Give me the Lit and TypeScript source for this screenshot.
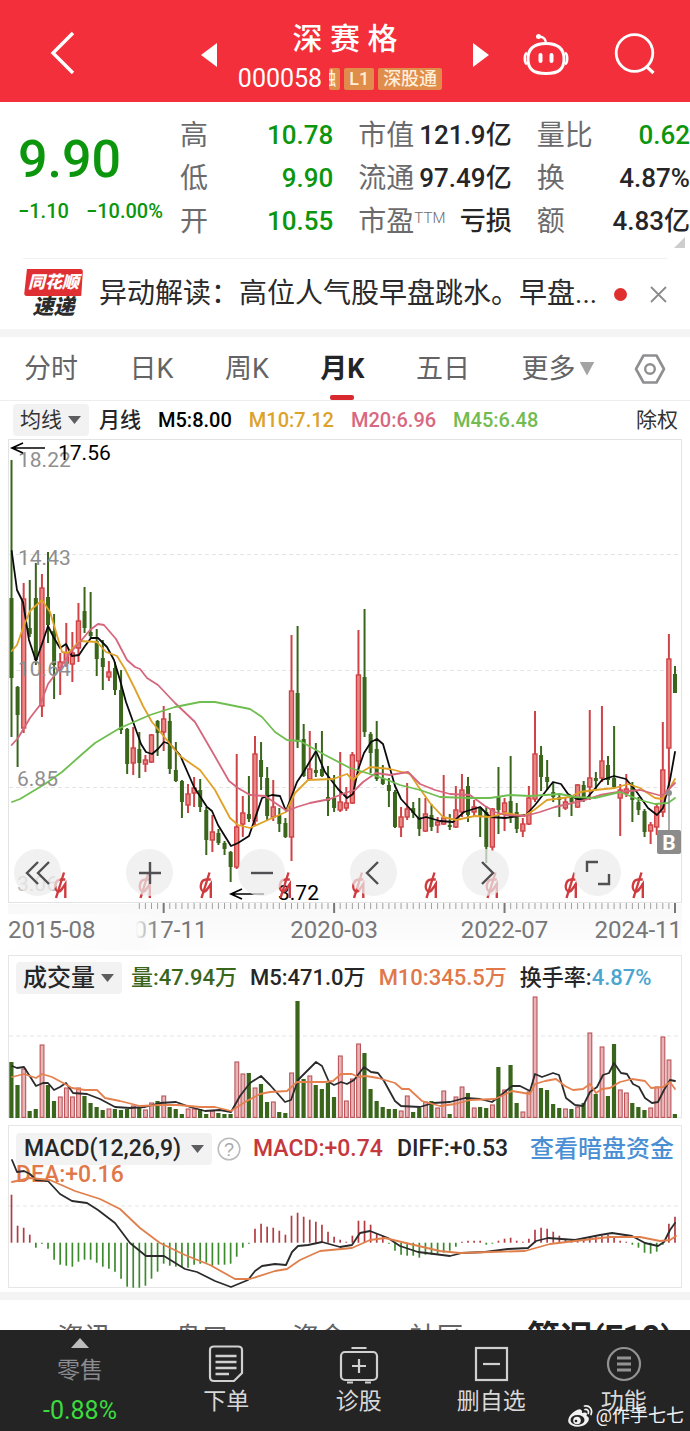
import { LitElement, html, svg, css } from "lit";
import { customElement } from "lit/decorators.js";

type Candle = [up: 0 | 1, high: number, top: number, bottom: number, low: number];

const FIRST_X = 11.5;
const STEP = 6.087;
const xAt = (i: number) => FIRST_X + i * STEP;

/* One entry per month: direction, high, body top, body bottom, low (chart units). */
const CANDLES: Candle[] = [
  [0,460,598,678,737],[0,686,687,715,767],[1,583,599,728,733],[0,580,628,634,637],[0,563,598,660,665],
  [1,574,588,706,717],[0,552,597,625,643],[0,614,631,665,699],[1,653,662,668,695],[1,623,653,663,667],
  [1,632,653,664,682],[1,603,621,648,662],[0,587,611,628,633],[0,592,632,636,638],[0,629,641,659,676],
  [0,640,658,667,690],[1,661,672,677,681],[0,662,668,690,695],[0,670,690,730,734],[0,728,729,764,774],
  [1,727,748,763,775],[0,732,749,763,778],[1,755,760,764,772],[1,734,735,762,763],[0,720,721,733,756],
  [1,706,719,732,751],[0,713,721,769,774],[0,742,770,781,782],[0,780,781,802,818],[1,784,794,805,813],
  [1,777,788,793,807],[0,779,790,807,812],[0,807,810,840,855],[1,815,832,840,852],[0,829,833,843,845],
  [0,841,843,849,855],[0,851,852,867,882],[1,754,827,867,869],[1,796,813,824,837],[0,776,814,819,822],
  [1,736,754,821,825],[0,742,760,777,790],[0,767,778,816,820],[1,780,807,817,821],[0,808,815,824,832],
  [0,818,823,837,838],[1,635,691,837,861],[0,626,693,742,748],[0,724,739,776,777],[1,731,769,779,780],
  [0,743,770,773,777],[0,731,769,776,777],[0,766,797,801,816],[0,775,798,808,812],[1,752,802,810,812],
  [1,787,803,808,811],[1,752,755,803,804],[1,630,675,761,773],[0,609,677,732,737],[0,732,734,753,773],
  [0,721,749,779,781],[0,765,778,784,785],[0,778,785,791,807],[0,790,792,827,828],[1,807,817,827,837],
  [1,783,809,817,820],[0,802,808,813,818],[0,798,817,829,836],[1,798,814,831,832],[0,804,815,827,831],
  [1,817,822,825,833],[1,775,818,824,825],[0,814,825,827,830],[1,786,810,827,828],[1,774,790,812,817],
  [0,777,786,815,822],[1,800,807,812,816],[0,807,808,817,837],[0,806,812,847,863],[1,808,809,847,851],
  [0,767,796,810,834],[1,798,803,812,831],[0,756,801,817,823],[0,803,812,829,833],[1,818,824,831,837],
  [1,786,798,824,825],[1,711,754,799,802],[0,746,755,777,791],[0,760,777,782,790],[0,782,792,797,802],
  [0,793,797,800,817],[1,798,802,808,810],[0,795,798,802,816],[1,784,785,807,808],[0,781,785,800,802],
  [1,710,778,787,800],[0,772,778,781,789],[1,706,761,778,782],[0,756,765,780,785],[0,726,778,787,788],
  [1,784,790,798,836],[1,774,789,793,797],[0,782,785,800,822],[0,797,802,810,815],[0,809,811,832,837],
  [1,822,825,831,844],[1,804,807,827,835],[1,722,770,812,817],[1,634,659,748,793],[0,666,674,693,693],
];

const VOLUMES = [
  56,33,49,7,9,73,33,17,21,30,21,30,22,15,11,8,9,9,8,9,12,10,8,15,17,22,11,9,4,9,9,9,4,7,5,4,4,56,44,45,
  30,34,16,16,6,5,45,117,39,42,33,29,35,21,62,17,39,74,65,29,17,11,9,9,7,22,6,10,16,17,10,27,4,21,31,25,10,
  11,10,13,51,28,53,15,6,26,121,30,28,14,10,9,9,11,15,85,24,71,22,74,28,25,15,11,8,10,31,81,58,4,
];

const MACD_BARS = [
  48,17,15,8,-5,-1,-6,-17,-22,-23,-24,-19,-17,-17,-20,-24,-26,-29,-36,-44,-45,-45,-43,-36,-29,-21,-23,-24,
  -25,-25,-22,-21,-20,-23,-22,-22,-21,-14,-5,-1,14,19,16,15,12,8,27,30,26,23,21,18,11,6,3,1,7,22,22,18,9,7,
  -1,-8,-12,-13,-13,-15,-12,-12,-11,-10,-8,-4,1,2,2,2,-2,-1,2,4,5,2,1,4,13,15,14,11,7,4,3,3,4,6,6,7,8,6,2,1,
  -2,-5,-10,-11,-9,-2,19,26,
];

const LINES = {
  m5: "11.7,551 17,590 23,602 29,640 36,661 43,641 48,626 54,638 60,648 66,644 72,656 79,655 85,646 91,638 98,638 107,647 114,660 120,680 126,702 136,730 141,744 146,752 152,754 158,749 164,742 170,744 180,755 194,787 207,807 212,811 218,825 231,846 238,843 249,836 262,798 272,795 280,796 286,811 297,782 303,773 316,751 325,772 338,789 347,798 353,794 358,770 364,753 371,742 377,739 383,744 389,765 395,786 401,799 413,812 419,819 426,817 440,821 453,822 464,812 480,807 490,817 505,818 526,815 535,805 553,782 561,784 568,794 577,799 586,799 593,791 602,780 614,776 626,779 636,791 648,808 657,815 663,808 670,780 675,752",
  m10: "11.7,651 17,645 23,628 30,611 42,600 50,612 56,632 62,652 68,653 80,641 97,642 106,652 117,656 125,669 135,689 143,706 152,722 166,739 180,756 200,770 215,790 230,818 238,825 250,828 270,819 286,812 295,793 308,780 333,779 347,774 353,780 360,773 370,767 390,769 410,774 418,786 430,803 443,817 456,820 475,816 490,817 505,813 524,816 534,810 547,800 570,797 580,792 595,790 615,788 628,784 640,788 655,798 662,799 668,791 675,779",
  m20: "11.7,745 18,738 30,718 40,705 48,684 60,668 70,653 80,642 90,630 98,624 104,625 116,639 127,660 135,667 140,669 147,678 158,685 175,703 195,722 213,753 229,781 238,788 250,795 265,796 287,811 297,807 310,803 330,799 345,793 355,790 363,782 376,773 390,775 408,772 420,784 435,790 450,794 470,795 485,806 495,812 505,815 525,816 540,812 555,807 585,800 600,795 618,792 640,790 662,796 675,783",
  m45: "12,802 20,799 30,793 45,784 62,772 80,756 95,743 120,728 150,715 175,707 200,702 215,702 240,707 250,709 262,717 275,732 287,740 300,741 325,755 350,768 370,774 385,779 400,785 420,790 440,797 470,798 490,798 510,795 530,796 560,794 575,797 595,798 620,792 640,800 655,804 668,803 675,798",
  v5: "12,1066 17,1068 24,1067 36,1086 43,1083 48,1083 54,1090 60,1087 66,1083 73,1093 87,1094 100,1099 115,1107 130,1108 145,1107 160,1103 176,1102 190,1107 205,1111 220,1110 231,1112 240,1096 250,1083 261,1076 270,1085 278,1094 285,1102 291,1100 298,1080 305,1073 316,1062 322,1066 329,1082 334,1085 341,1082 347,1084 354,1080 364,1067 371,1072 378,1073 384,1081 395,1101 401,1106 420,1107 433,1103 450,1102 465,1098 480,1099 492,1102 500,1096 512,1086 520,1086 530,1091 535,1074 542,1077 553,1073 559,1075 566,1098 575,1105 583,1106 590,1092 597,1087 603,1075 609,1073 614,1063 621,1073 627,1074 633,1084 639,1087 645,1098 652,1103 658,1102 664,1090 670,1080 675,1081",
  v10: "12,1077 24,1074 36,1078 42,1074 52,1077 65,1084 72,1088 85,1090 97,1090 105,1098 120,1101 140,1106 160,1105 178,1105 200,1107 215,1107 231,1111 245,1102 260,1094 270,1092 287,1091 297,1082 325,1082 333,1081 341,1074 352,1074 358,1077 366,1076 378,1078 395,1083 402,1089 409,1089 422,1101 440,1106 455,1104 470,1100 495,1099 512,1091 530,1094 535,1084 545,1081 556,1079 565,1086 573,1090 583,1089 590,1084 596,1093 602,1089 610,1088 620,1082 632,1079 645,1081 651,1088 663,1087 670,1082 675,1089",
  diff: "12,1160 17,1172 24,1171 30,1174 36,1180 48,1181 60,1194 72,1201 87,1203 98,1210 115,1223 130,1243 146,1256 164,1256 185,1269 197,1272 215,1281 231,1287 248,1280 255,1271 262,1266 275,1264 286,1265 292,1252 298,1246 308,1245 322,1242 340,1247 352,1245 360,1233 370,1231 388,1238 400,1246 418,1252 450,1256 462,1253 485,1252 508,1249 528,1248 536,1241 548,1238 575,1240 600,1235 612,1233 632,1236 645,1243 658,1246 664,1242 670,1230 675,1223",
  dea: "12,1182 30,1178 50,1180 75,1191 100,1199 120,1209 140,1228 160,1243 185,1255 210,1265 235,1279 250,1279 275,1271 287,1269 300,1260 320,1251 352,1248 370,1240 385,1238 410,1244 440,1251 460,1253 490,1252 525,1251 550,1244 575,1241 610,1237 640,1237 660,1241 670,1240 676,1236",
};

const GREEN = "#3a661c";
const RED = "#cf4246";

const line = (points: string, color: string) =>
  svg`<polyline points=${points} fill="none" stroke=${color} stroke-width="1.8" stroke-linejoin="round" stroke-linecap="round"/>`;

const grid = (y: number) =>
  svg`<line x1="9" x2="682" y1=${y} y2=${y} stroke="#e4e4e4" stroke-dasharray="4 3"/>`;

const candle = ([up, high, top, bottom, low]: Candle, i: number) => {
  const x = xAt(i);
  return up
    ? svg`<line x1=${x} x2=${x} y1=${high} y2=${low} stroke=${RED} stroke-width="2"/>
          <rect x=${x - 2} y=${top} width="4" height=${bottom - top} fill="#e88784" stroke=${RED} stroke-width="1.4"/>`
    : svg`<line x1=${x} x2=${x} y1=${high} y2=${low} stroke=${GREEN} stroke-width="2"/>
          <rect x=${x - 2} y=${top} width="4" height=${bottom - top} fill=${GREEN}/>`;
};

const volume = (h: number, i: number) =>
  CANDLES[i][0]
    ? svg`<rect x=${xAt(i) - 1.8} y=${1117.4 - h + 0.6} width="3.8" height=${h - 0.6} fill="#e8b4b6" stroke="#b9555a" stroke-width="1.1"/>`
    : svg`<rect x=${xAt(i) - 2.2} y=${1118 - h} width="4.2" height=${h} fill=${GREEN}/>`;

const macdBar = (h: number, i: number) =>
  svg`<line x1=${xAt(i)} x2=${xAt(i)} y1="1242.7" y2=${1242.7 - h} stroke=${h > 0 ? "#b23c42" : "#3b8b2c"} stroke-width="1.7"/>`;

/* Dividend event glyph: a bowl, a stem and a slash. */
const eventMark = (x: number) => svg`
  <g transform="translate(${x} 886)" fill="none" stroke="#cf3b3e" stroke-width="2.4">
    <path d="M4.8 -6.5H1C-6 -7 -7 4 -2.500 5.500C0 6 1.500 3 4.800 -2V12"/>
    <path d="M-4.500 12L3.500 -13.500"/>
  </g>`;

const arrow = (x: number, y: number) =>
  svg`<path d="M${x + 33} ${y}H${x}M${x + 11} ${y - 5}L${x} ${y}L${x + 11} ${y + 5}" fill="none" stroke="#000" stroke-width="1.7"/>`;

@customElement("stock-header")
class StockHeader extends LitElement {
  static styles = css`
    :host { display: block; background: #f22f3a; color: #fff; }
    .bar { display: grid; grid-template-columns: 1fr 290px 1fr; align-items: center; height: 102px; }
    button { border: 0; padding: 0; background: none; color: inherit; display: grid; place-items: center; }
    .back { justify-self: start; margin: 4px 0 0 48px; }
    .mid { display: flex; align-items: center; justify-content: space-between; }
    .mid button { margin-top: 8px; }
    .title { display: flex; flex-direction: column; align-items: center; padding-top: 16px; }
    h1 { margin: 0; font-size: 30px; font-weight: 500; line-height: 40px; white-space: pre; }
    .sub { display: flex; align-items: center; gap: 4px; line-height: 40px; padding-right: 10px; }
    .code { font-size: 25px; padding-right: 3px; }
    .tag { background: #e08c4b; color: #ffeed8; border-radius: 2px; font-size: 18px; font-weight: 500; line-height: 22px; height: 22px; padding: 0 5px; }
    .cut { width: 11px; padding: 0; overflow: hidden; display: flex; justify-content: flex-end; box-sizing: border-box; padding-right: 4px; }
    .right { display: flex; justify-content: flex-end; align-items: center; gap: 44px; padding: 6px 33px 0 0; }
  `;
  render() {
    return html`<header class="bar">
      <button class="back" aria-label="返回"><svg width="28" height="46" viewBox="0 0 28 46"><path d="M25 3L5 23L25 43" fill="none" stroke="#fff" stroke-width="3.4"/></svg></button>
      <div class="mid">
        <button aria-label="上一只"><svg width="17" height="26" viewBox="0 0 17 26"><path d="M17 1V25L1 13Z" fill="#fff"/></svg></button>
        <div class="title">
          <h1>深 赛 格</h1>
          <div class="sub"><span class="code">000058</span><span class="tag cut">融</span><span class="tag">L1</span><span class="tag">深股通</span></div>
        </div>
        <button aria-label="下一只"><svg width="17" height="26" viewBox="0 0 17 26"><path d="M0 1V25L16 13Z" fill="#fff"/></svg></button>
      </div>
      <div class="right">
        <button aria-label="助手"><svg width="48" height="44" viewBox="0 0 48 44" fill="none" stroke="#fff" stroke-width="3">
          <path d="M24 11.500C38 11.500 42 19 42 27C42 37 37 41.500 24 41.500C11 41.500 6 37 6 27C6 19 10 11.500 24 11.500Z"/>
          <path d="M5 21C2 22 2 31 5 32M43 21C46 22 46 31 43 32" stroke-width="2.500"/>
          <path d="M24 12C24 7 22 5 17 4.500" stroke-width="2.500"/><circle cx="16.500" cy="4.500" r="2.500" fill="#fff" stroke="none"/>
          <path d="M18.500 23V29M29.500 23V29" stroke-width="4" stroke-linecap="round"/></svg></button>
        <button aria-label="搜索"><svg width="43" height="44" viewBox="0 0 43 44" fill="none" stroke="#fff" stroke-width="2.800"><circle cx="20.500" cy="21" r="18.300"/><path d="M32 34L39.500 41" stroke-width="3.200"/></svg></button>
      </div>
    </header>`;
  }
}

@customElement("stock-quote")
class StockQuote extends LitElement {
  static styles = css`
    :host { display: block; }
    .quote { display: grid; grid-template-columns: 162px 1fr; padding: 12px 0 15px 18px; color: #262628; }
    .main { color: #0b960d; padding-top: 16px; }
    .price { font-size: 52px; font-weight: 500; line-height: 60px; }
    .chg { display: flex; gap: 17px; font-size: 20px; line-height: 24px; padding-top: 9px; font-weight: 500; }
    .cols { display: grid; grid-template-columns: repeat(3, 1fr); gap: 25px; }
    dl { margin: 0; }
    .row { display: flex; justify-content: space-between; line-height: 43px; white-space: nowrap; }
    dt { font-size: 28px; color: #6b6b6d; }
    dd { margin: 0; font-size: 26px; font-weight: 500; }
    .g { color: #0b960d; }
    sup { font-size: 15px; font-weight: 300; line-height: 16px; vertical-align: 8px; }
    .corner { display: block; width: 11px; height: 11px; margin: -21px 5px 10px auto; background: #cdcdcd; clip-path: polygon(100% 0, 100% 100%, 0 100%); }
  `;
  render() {
    const row = (k: unknown, v: string, c = "") => html`<div class="row"><dt>${k}</dt><dd class=${c}>${v}</dd></div>`;
    return html`<section class="quote">
        <div class="main"><div class="price">9.90</div><div class="chg"><span>−1.10</span><span>−10.00%</span></div></div>
        <div class="cols">
          <dl>${row("高", "10.78", "g")}${row("低", "9.90", "g")}${row("开", "10.55", "g")}</dl>
          <dl>${row("市值", "121.9亿")}${row("流通", "97.49亿")}${row(html`市盈<sup>TTM</sup>`, "亏损")}</dl>
          <dl>${row("量比", "0.62", "g")}${row("换", "4.87%")}${row("额", "4.83亿")}</dl>
        </div>
      </section><i class="corner"></i>`;
  }
}

@customElement("news-strip")
class NewsStrip extends LitElement {
  static styles = css`
    :host { display: block; }
    .news { display: flex; align-items: center; margin: 0 23px; height: 70px; border-top: 1px solid #f0f0f0; }
    .badge { width: 59px; flex: none; margin-left: 1px; text-align: center; font-weight: 900; font-style: italic; }
    .top { display: block; background: #df2f33; color: #fff; font-size: 17px; line-height: 27px; border-radius: 3px; clip-path: polygon(5% 0, 100% 0, 97% 100%, 0 100%); }
    .low { display: block; color: #2b2b2b; font-size: 21px; line-height: 23px; }
    a { flex: 1; min-width: 0; margin-left: 16px; color: #2a2a2c; font-size: 28px; line-height: 40px; text-decoration: none; white-space: nowrap; overflow: hidden; }
    .dot { width: 13px; height: 13px; border-radius: 50%; background: #e02f2f; margin: 0 23px 0 10px; flex: none; }
    button { border: 0; padding: 0; background: none; display: grid; }
  `;
  render() {
    return html`<section class="news">
      <span class="badge"><span class="top">同花顺</span><span class="low">速递</span></span>
      <a href="#news">异动解读：高位人气股早盘跳水。早盘...</a>
      <i class="dot"></i>
      <button aria-label="关闭"><svg width="17" height="17" viewBox="0 0 17 17"><path d="M1 1L16 16M16 1L1 16" stroke="#8c8c8c" stroke-width="1.800"/></svg></button>
    </section>`;
  }
}

const selectStyles = css`
  .pick { display: inline-grid; align-items: center; background: #f2f2f3; border-radius: 4px; }
  .pick select { grid-area: 1 / 1; appearance: none; border: 0; margin: 0; background: none; font: inherit; color: inherit; padding: 0 27px 0 7px; height: 32px; line-height: 32px; }
  .pick::after { content: ""; grid-area: 1 / 1; justify-self: end; margin-right: 8px; width: 13px; height: 8px; background: #5d5d5f; clip-path: polygon(0 0, 100% 0, 50% 100%); pointer-events: none; }
`;

@customElement("period-tabs")
class PeriodTabs extends LitElement {
  static styles = [selectStyles, css`
    :host { display: block; border-top: 8px solid #f4f4f5; border-bottom: 1px solid #ededee; }
    nav { display: flex; justify-content: space-between; align-items: stretch; height: 63px; padding: 0 24px; font-size: 27px; color: #646466; }
    button { border: 0; padding: 0; background: none; font: inherit; color: inherit; line-height: 40px; display: grid; align-items: center; }
    .on { color: #242426; font-weight: 700; grid-template-rows: 1fr; }
    .on::after { content: ""; grid-area: 1 / 1; place-self: end center; width: 24px; height: 5px; border-radius: 2px; background: #d9292f; }
    .on span { grid-area: 1 / 1; }
    .pick.more { background: none; margin-right: -12px; }
    .pick.more select { padding: 0 19px 0 0; height: 40px; line-height: 40px; }
    .pick.more::after { width: 15px; height: 14px; margin: 0; background: #a3a3a3; }
  `];
  render() {
    return html`<nav>
      <button>分时</button><button>日K</button><button>周K</button>
      <button class="on"><span>月K</span></button><button>五日</button>
      <span class="pick more"><select aria-label="周期"><option>更多</option></select></span>
      <button aria-label="设置"><svg width="32" height="32" viewBox="0 0 32 32" fill="none" stroke="#8f8f91"><path d="M9.500 2.500H22.500L30 16L22.500 29.500H9.500L2 16Z" stroke-width="2.600" stroke-linejoin="round"/><circle cx="16" cy="16" r="4.800" stroke-width="2.400"/></svg></button>
    </nav>`;
  }
}

@customElement("price-chart")
class PriceChart extends LitElement {
  static styles = [selectStyles, css`
    :host { display: block; }
    .legend { display: flex; align-items: center; height: 38px; padding: 0 12px 0 13px; font-size: 20px; line-height: 32px; font-weight: 500; gap: 17px; white-space: nowrap; }
    .pick { font-size: 21px; font-weight: 400; color: #333; margin-right: -7px; }
    .name { font-size: 21px; color: #262628; }
    .m5 { color: #000; } .m10 { color: #dca32b; } .m20 { color: #d8687f; } .m45 { color: #72bb50; }
    .adj { font-size: 21px; line-height: 32px; font-weight: 400; color: #333; border: 0; background: none; padding: 0; font-family: inherit; margin-left: auto; }
    .plot { position: relative; margin: 0 8px; }
    .plot svg { display: block; width: 100%; }
    text { font-size: 21px; }
    .scale { fill: #8f8f8f; }
    .date { font-size: 24px; fill: #77777a; }
    .tools { position: absolute; left: 6px; right: 0; top: 410px; display: flex; gap: 65px; }
    .tools button { width: 47px; height: 47px; flex: none; border: 0; border-radius: 50%; padding: 0; background: #ebebebb8; display: grid; place-items: center; }
    .tools svg { width: 30px; height: 30px; fill: none; stroke: #505052; stroke-width: 2.4; }
  `];
  render() {
    const tool = (name: string, d: string) => html`<button aria-label=${name}><svg viewBox="0 0 30 30"><path d=${d}/></svg></button>`;
    return html`
      <div class="legend">
        <span class="pick"><select aria-label="指标"><option>均线</option></select></span>
        <span class="name">月线</span><span class="m5">M5:8.00</span><span class="m10">M10:7.12</span><span class="m20">M20:6.96</span><span class="m45">M45:6.48</span>
        <button class="adj">除权</button>
      </div>
      <div class="plot">
        <svg viewBox="8 439 674 514" role="img" aria-label="月K">
          <defs>
            <linearGradient id="fade"><stop offset="0" stop-color="#fff"/><stop offset="0.85" stop-color="#fbfbfb"/><stop offset="1" stop-color="#fbfbfb" stop-opacity="0"/></linearGradient>
            <linearGradient id="band" x2="0" y2="1"><stop offset="0" stop-color="#f8f8f8"/><stop offset="1" stop-color="#fefefe"/></linearGradient>
          </defs>
          <rect x="8.500" y="439.500" width="673" height="463" fill="none" stroke="#e3e3e3"/>
          ${[554.5, 670.5, 787.5].map(grid)}
          ${CANDLES.map(candle)}
          ${line(LINES.m5, "#0c0c0c")}${line(LINES.m10, "#dfa126")}${line(LINES.m20, "#d5667c")}${line(LINES.m45, "#6fbe50")}
          <text class="scale" x="18" y="467">18.22</text><text class="scale" x="18" y="565">14.43</text>
          <text class="scale" x="18" y="676">10.64</text><text class="scale" x="17" y="786">6.85</text>
          <text class="scale" x="17" y="891" opacity="0.6">3.06</text>
          <text x="58" y="460">17.56</text><text x="278" y="900">3.72</text>
          ${arrow(12, 448)}${arrow(231, 894)}
          ${[60.5, 145, 206, 285, 358.5, 431, 492, 571, 638].map(eventMark)}
          <path d="M669 793V831" stroke="#8f8f8f" stroke-width="1.500"/><circle cx="669" cy="793" r="3" fill="#8f8f8f"/>
          <rect x="657" y="830" width="24" height="24" rx="2" fill="#8b8b8b"/><text x="669" y="850" text-anchor="middle" fill="#fff" font-weight="700">B</text>
          <rect x="8" y="904" width="674" height="49" fill="url(#band)"/>
          ${CANDLES.map((_, i) => {
            if (i < 21) return "";
            const major = (i - 25) % 28 === 0;
            return svg`<line x1=${xAt(i)} x2=${xAt(i)} y1="903" y2=${major ? 913 : 909} stroke=${major ? "#777" : "#a0a0a0"} stroke-width=${major ? 2 : 1}/>`;
          })}
          <text class="date" x=${xAt(25)} y="938" text-anchor="middle">2017-11</text>
          <rect x="8" y="914" width="150" height="36" fill="url(#fade)"/>
          <text class="date" x="8" y="938">2015-08</text>
          <text class="date" x=${xAt(53)} y="938" text-anchor="middle">2020-03</text>
          <text class="date" x=${xAt(81)} y="938" text-anchor="middle">2022-07</text>
          <text class="date" x="682" y="938" text-anchor="end">2024-11</text>
        </svg>
        <div class="tools">
          ${tool("最早", "M15 4L4 15L15 26M26 4L15 15L26 26")}
          ${tool("放大", "M15 4V26M4 15H26")}
          ${tool("缩小", "M4 15H26")}
          ${tool("向左", "M19 4L8 15L19 26")}
          ${tool("向右", "M11 4L22 15L11 26")}
          ${tool("全屏", "M4 14V4H15M26 16V26H15")}
        </div>
      </div>`;
  }
}

@customElement("volume-chart")
class VolumeChart extends LitElement {
  static styles = [selectStyles, css`
    :host { display: block; margin: 2px 8px 0; }
    .panel { display: grid; }
    .panel > * { grid-area: 1 / 1; }
    .panel svg { display: block; width: 100%; }
    .legend { display: flex; align-items: center; align-self: start; gap: 13px; margin: 7px 0 0 8px; height: 32px; font-size: 22px; line-height: 32px; font-weight: 500; white-space: nowrap; color: #262628; }
    .pick { font-size: 24px; margin-right: -4px; }
    .g { color: #3a661c; } .o { color: #e0784a; } .b { color: #4aa5cf; }
  `];
  render() {
    return html`<section class="panel">
      <svg viewBox="8 955 674 163" role="img" aria-label="成交量">
        <rect x="8.500" y="955.500" width="673" height="162" fill="none" stroke="#e6e6e6"/>
        ${grid(1036)}${VOLUMES.map(volume)}
        ${line(LINES.v5, "#2b2b2b")}${line(LINES.v10, "#e5804f")}
      </svg>
      <div class="legend">
        <span class="pick"><select aria-label="副图指标"><option>成交量</option></select></span>
        <span class="g">量:47.94万</span><span>M5:471.0万</span><span class="o">M10:345.5万</span><span>换手率:<span class="b">4.87%</span></span>
      </div>
    </section>`;
  }
}

@customElement("macd-chart")
class MacdChart extends LitElement {
  static styles = [selectStyles, css`
    :host { display: block; margin: 7px 8px 4px; }
    .panel { display: grid; }
    .panel > * { grid-area: 1 / 1; }
    .panel svg.plot { display: block; width: 100%; z-index: 1; pointer-events: none; }
    .legend { margin: 8px 8px 0 8px; font-size: 23px; font-weight: 500; color: #262628; white-space: nowrap; }
    .row { display: flex; align-items: center; height: 32px; line-height: 32px; }
    .pick select { padding: 0 30px 0 8px; }
    .help { border: 0; padding: 0; background: none; display: grid; margin: 0 12px 0 5px; }
    .help text { font-size: 18px; fill: #aaa; }
    .r { color: #c4383e; margin-right: 14px; }
    .o { color: #e0784a; line-height: 20px; }
    a { margin-left: auto; color: #4a8fd4; font-size: 24px; text-decoration: none; }
  `];
  render() {
    return html`<section class="panel">
      <div class="legend">
        <div class="row">
          <span class="pick"><select aria-label="副图指标"><option>MACD(12,26,9)</option></select></span>
          <button class="help" aria-label="说明"><svg width="24" height="24" viewBox="0 0 24 24"><circle cx="12" cy="12" r="10.800" fill="none" stroke="#bbb" stroke-width="1.500"/><text x="12" y="18.500" text-anchor="middle">?</text></svg></button>
          <span class="r">MACD:+0.74</span><span>DIFF:+0.53</span><a href="#fund">查看暗盘资金</a>
        </div>
        <div class="o">DEA:+0.16</div>
      </div>
      <svg class="plot" viewBox="8 1125 674 163" role="img" aria-label="MACD">
        <rect x="8.500" y="1125.500" width="673" height="162" fill="none" stroke="#e6e6e6"/>
        ${grid(1206)}${MACD_BARS.map(macdBar)}
        ${line(LINES.diff, "#2b2b2b")}${line(LINES.dea, "#e07f4b")}
      </svg>
    </section>`;
  }
}

@customElement("info-tabs")
class InfoTabs extends LitElement {
  static styles = css`
    :host { display: block; border-top: 8px solid #f4f4f5; }
    nav { display: flex; justify-content: space-between; height: 30px; overflow: hidden; padding: 0 18px 0 57px; font-size: 27px; color: #646466; }
    a { color: inherit; text-decoration: none; line-height: 40px; padding-top: 18px; white-space: nowrap; }
    .on { color: #242426; font-weight: 700; font-size: 33px; }
  `;
  render() {
    return html`<nav><a href="#news">资讯</a><a href="#book">盘口</a><a href="#fund">资金</a><a href="#club">社区</a><a class="on" href="#f10">简况(F10)</a></nav>`;
  }
}

@customElement("action-bar")
class ActionBar extends LitElement {
  static styles = css`
    :host { display: block; position: relative; background: #242425; color: #d8d8d8; }
    .bar { display: grid; grid-template-columns: 160px repeat(4, 1fr); height: 101px; }
    button { border: 0; padding: 13px 0 0; background: none; font: inherit; font-size: 23px; line-height: 30px; color: inherit; display: flex; flex-direction: column; align-items: center; gap: 2px; }
    button svg { display: block; fill: none; stroke: #d0d0d0; stroke-width: 2.2; }
    .sector { padding-top: 8px; gap: 0; }
    .up { width: 18px; height: 10px; background: #bdbdbd; clip-path: polygon(50% 0, 100% 100%, 0 100%); margin-bottom: 8px; }
    .name { color: #8b8b90; }
    .pct { color: #3bdb3e; font-size: 25px; line-height: 30px; margin-top: 10px; }
    .mark { position: absolute; right: 6px; bottom: 3px; display: flex; align-items: center; gap: 3px; font-size: 18px; line-height: 24px; color: #f2f2f2; }
  `;
  render() {
    return html`<div class="bar">
      <button class="sector"><i class="up"></i><span class="name">零售</span><span class="pct">-0.88%</span></button>
      <button><svg width="38" height="42" viewBox="0 0 38 42"><path d="M7 3.500H31Q35 3.500 35 7V30L27 38H7Q3 38 3 34V7Q3 3.500 7 3.500Z"/><path d="M8.500 13H29.500M8.500 19H29.500M8.500 25H29.500M8.500 31H22" stroke-width="2.600"/></svg>下单</button>
      <button><svg width="40" height="42" viewBox="0 0 40 42"><rect x="2" y="9" width="36" height="28" rx="4"/><path d="M12.500 5H27.500M20 16V30M13 23H27M8 39.500H14M26 39.500H32"/></svg>诊股</button>
      <button><svg width="38" height="42" viewBox="0 0 38 42"><rect x="4" y="5" width="31" height="32"/><path d="M11 21H28"/></svg>删自选</button>
      <button><svg width="38" height="42" viewBox="0 0 38 42" stroke-opacity="0.65"><circle cx="19" cy="21" r="16"/><path d="M12 15H26M12 21H26M12 27H26" stroke-width="3"/></svg>功能</button>
    </div>
    <div class="mark"><svg width="26" height="24" viewBox="0 0 26 24">
      <path d="M10 6C13 4.500 15.500 5.500 15 9C19 7.500 21 9 19.500 12C23 13 22.500 17 19 20C14 24 4 23.500 1.500 18.500C0 14 5 8 10 6Z" fill="#f2f2f2"/>
      <ellipse cx="10.500" cy="16" rx="7" ry="5" fill="#242425"/><circle cx="10" cy="16.500" r="3.800" fill="#f2f2f2"/><circle cx="9" cy="17" r="1.300" fill="#242425"/>
      <path d="M17.500 2C22.500 1 26 5.500 24 10.500M18 5.500C20.500 5 22 7 21.300 9.500" fill="none" stroke="#f2f2f2" stroke-width="1.700" stroke-linecap="round"/></svg>@作手七七</div>`;
  }
}

@customElement("app-root")
class AppRoot extends LitElement {
  static styles = css`
    :host { display: block; background: #fff; overflow: hidden; font-family: Roboto, "Noto Sans CJK SC", sans-serif; }
  `;
  render() {
    return html`<stock-header></stock-header><stock-quote></stock-quote><news-strip></news-strip><period-tabs></period-tabs>
      <price-chart></price-chart><volume-chart></volume-chart><macd-chart></macd-chart><info-tabs></info-tabs><action-bar></action-bar>`;
  }
}
